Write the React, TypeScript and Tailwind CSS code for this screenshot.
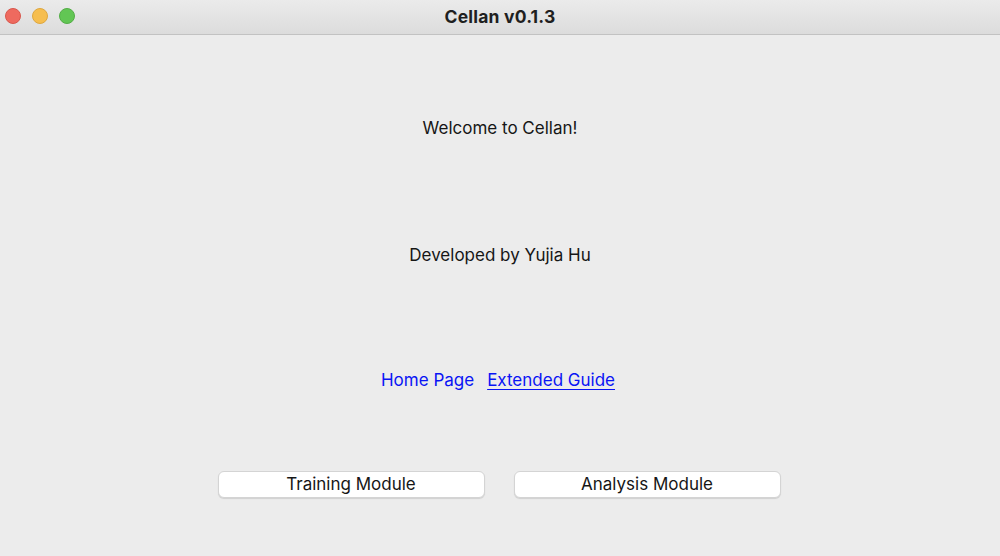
export default function App() {
  return (
    <div className="w-[1000px] h-[556px] flex flex-col bg-[#ececec] font-['Inter','Liberation_Sans',sans-serif] overflow-hidden">
      {/* Title bar */}
      <div className="h-[35px] shrink-0 relative flex items-center justify-center bg-gradient-to-b from-[#ebebeb] to-[#dcdcdc] border-b border-[#c2c2c2]">
        <div className="absolute left-[5px] top-[8px] flex gap-[11px]">
          <span className="w-4 h-4 rounded-full bg-[#ee6a5f] border border-[#d9574c]" />
          <span className="w-4 h-4 rounded-full bg-[#f6be4f] border border-[#dea73f]" />
          <span className="w-4 h-4 rounded-full bg-[#62c654] border border-[#53ad46]" />
        </div>
        <span className="text-[17.5px] font-bold text-[#1f1f1f] tracking-[0.2px]">Cellan v0.1.3</span>
      </div>

      {/* Content */}
      <div className="flex-1 flex flex-col items-center text-[#161616] text-[17px]">
        <div className="mt-[83px] h-5 leading-5">Welcome to Cellan!</div>
        <div className="mt-[107px] h-5 leading-5">Developed by Yujia Hu</div>
        <div className="mt-[105px] h-5 leading-5 flex gap-[13px] pr-[4px] text-[#0a14f5]">
          <a className="cursor-pointer">Home Page</a>
          <a className="underline underline-offset-[3px] cursor-pointer">Extended Guide</a>
        </div>
        <div className="mt-[81px] flex gap-[29px] pr-[2px]">
          <button className="w-[267px] h-[27px] bg-white rounded-[6px] border border-[#d4d4d4] shadow-[0_1px_1px_rgba(0,0,0,0.12)] text-[17px] text-[#161616] leading-none">
            Training Module
          </button>
          <button className="w-[267px] h-[27px] bg-white rounded-[6px] border border-[#d4d4d4] shadow-[0_1px_1px_rgba(0,0,0,0.12)] text-[17px] text-[#161616] leading-none">
            Analysis Module
          </button>
        </div>
      </div>
    </div>
  );
}
